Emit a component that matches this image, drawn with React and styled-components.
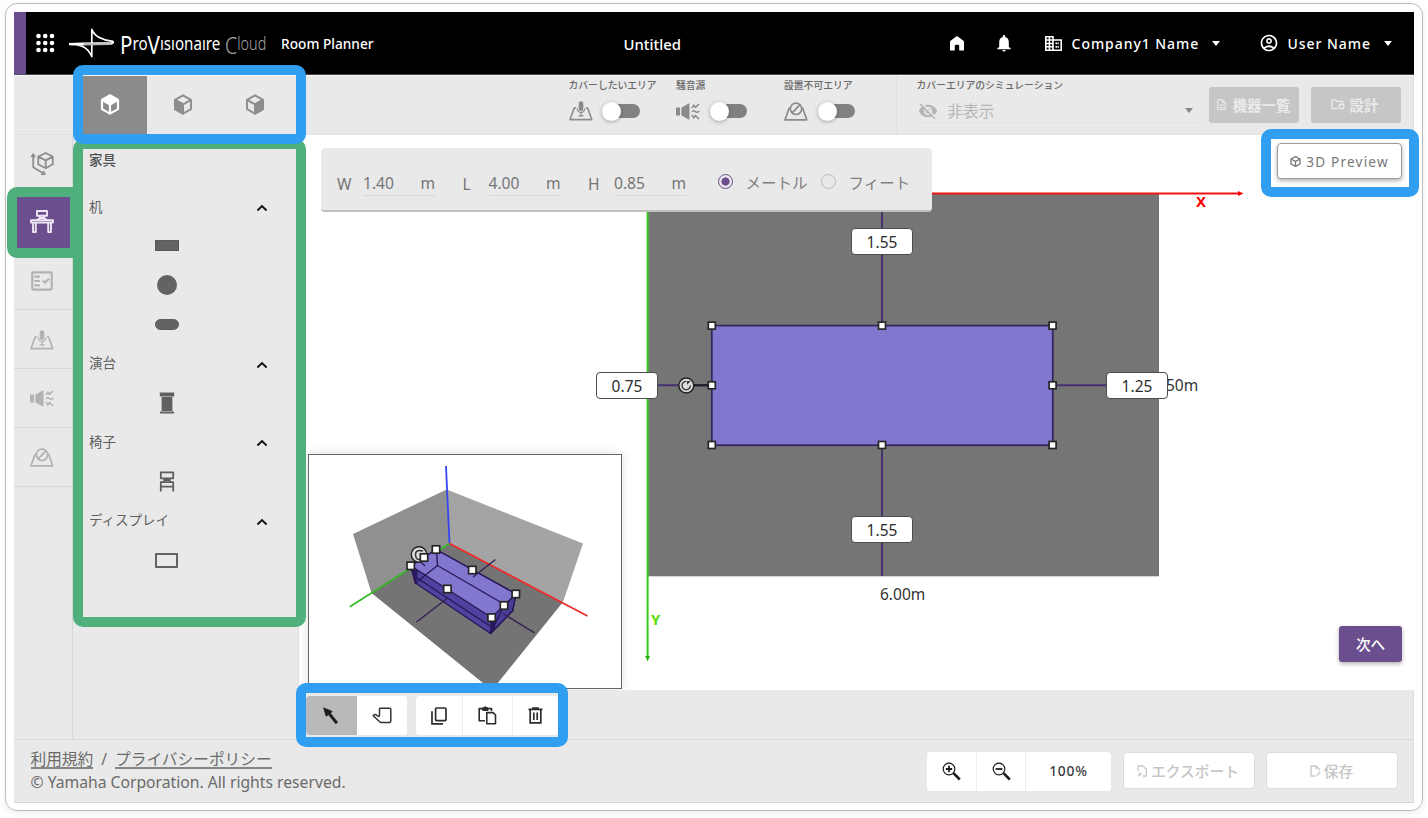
import React from "react";
import styled, { createGlobalStyle, css } from "styled-components";
import {
  MdOutlineAccountCircle,
  MdVisibilityOff,
  MdOutlineFactCheck,
  MdOutlineDescription,
} from "react-icons/md";

const GlobalStyle = createGlobalStyle`
  * { box-sizing: border-box; }
  body {
    margin: 0;
    background: #fff;
    font-family: "Noto Sans", "Noto Sans CJK JP", sans-serif;
    overflow: hidden;
  }
  svg { display: block; flex: none; }
`;

const Page = styled.div`
  position: relative;
  width: 1428px;
  height: 818px;
  padding: 3px 5px;
`;
const Frame = styled.div`
  width: 1418px;
  height: 808px;
  padding: 8px;
  border: 1px solid #bdbdbd;
  border-radius: 12px;
  box-shadow: 0 2px 6px rgba(0, 0, 0, 0.08);
`;
const Shell = styled.div`
  width: 1400px;
  height: 791px;
  display: flex;
  flex-direction: column;
  background: #e9e9e9;
  border-bottom: 1px solid #d6d6d6;
`;

/* Header */
const Header = styled.header`
  height: 63px;
  display: flex;
  align-items: center;
  background: #000;
  border-left: 12px solid #6b4e8e;
  border-bottom: 1px solid #4a4549;
  color: #fff;
  padding: 0 22px 0 10px;
`;
const HeaderGroup = styled.div`
  display: flex;
  align-items: center;
  width: ${(p) => p.$w || "auto"};
  margin-left: ${(p) => p.$ml || 0}px;
`;
const HeaderActions = styled(HeaderGroup)`
  margin-left: auto;
`;
const HeaderText = styled.span`
  font-size: ${(p) => p.$size || 14}px;
  font-weight: 500;
  letter-spacing: ${(p) => p.$ls || 0}px;
  margin-left: ${(p) => p.$ml || 0}px;
  line-height: 20px;
  padding-top: 1px;
  white-space: nowrap;
`;
const Caret = styled.span`
  width: 0;
  height: 0;
  margin-left: ${(p) => p.$ml || 0}px;
  border-left: 4.5px solid transparent;
  border-right: 4.5px solid transparent;
  border-top: 5px solid ${(p) => p.$color || "#fff"};
`;

/* Toolbar under the header */
const Toolbar = styled.div`
  height: 60px;
  display: flex;
  align-items: stretch;
  border-top: 1px solid #f7f7f7;
  border-bottom: 1px solid #e0e0e0;
  border-right: 1px solid #dedede;
  padding-left: 60px;
`;
const Tab = styled.div`
  width: 72.5px;
  display: flex;
  align-items: center;
  justify-content: center;
  padding-bottom: 2px;
  background: ${(p) => (p.$active ? "#8b8b8b" : "transparent")};
`;
const ToggleGroups = styled.div`
  display: flex;
  width: 605px;
  padding-left: 277px;
  border-right: 1px solid #e1e1e1;
`;
const ToggleCell = styled.div`
  width: ${(p) => p.$w}px;
  flex: none;
`;
const SmallLabel = styled.div`
  font-size: 9.8px;
  line-height: 14px;
  padding-top: 3px;
  height: 23px;
  color: #686868;
  font-weight: 500;
  white-space: nowrap;
`;
const ToggleRow = styled.div`
  display: flex;
  align-items: center;
  height: 24px;
`;
const Switch = styled.div`
  position: relative;
  width: 33.5px;
  height: 14px;
  margin-left: 13.5px;
  border-radius: 7px;
  background: #828282;
  &::before {
    content: "";
    position: absolute;
    left: -4px;
    top: -2.5px;
    width: 19px;
    height: 19px;
    border-radius: 50%;
    background: #fff;
    box-shadow: 0 1px 4px rgba(0, 0, 0, 0.3);
  }
`;
const Simulation = styled.div`
  width: 312px;
  padding-left: 20px;
`;
const SelectRow = styled.div`
  display: flex;
  align-items: center;
  width: 284px;
  height: 24px;
  border-bottom: 1px solid #e3e3e3;
  color: #b5b5b5;
  font-size: 15.6px;
  line-height: 22px;
  padding: 0 8px 0 1px;
  span:first-of-type { margin: 0 auto 0 10px; }
`;
const GreyButton = styled.div`
  display: flex;
  align-items: center;
  justify-content: center;
  gap: 5px;
  flex: none;
  width: 90px;
  height: 36px;
  margin: 11px 12px 0 0;
  padding: 0 2px 2px 0;
  border-radius: 3px;
  background: #c6c6c6;
  color: #ebebeb;
  font-size: 14.4px;
  font-weight: 700;
`;

/* Middle */
const Middle = styled.div`
  display: flex;
  height: 604px;
`;
const Rail = styled.nav`
  width: 59px;
  border-right: 1px solid #d6d6d6;
`;
const RailItem = styled.div`
  height: ${(p) => p.$h || 59}px;
  display: flex;
  align-items: center;
  justify-content: center;
  padding: 1px 3px 0 0;
  border-bottom: 1px solid ${(p) => (p.$active ? "#6b4e8e" : "#d8d8d8")};
  background: ${(p) => (p.$active ? "#6b4e8e" : "transparent")};
  color: #b2b2b2;
`;
const Panel = styled.aside`
  width: 226px;
  padding: 13px 30px 0 16px;
  border-right: 1px solid #dedede;
`;
const PanelTitle = styled.div`
  font-size: 13.5px;
  line-height: 24px;
  font-weight: 500;
  color: #505050;
`;
const SectionHead = styled.div`
  display: flex;
  align-items: center;
  justify-content: space-between;
  height: 24px;
  margin-top: ${(p) => p.$mt}px;
  color: #606060;
`;
const SectionTitle = styled.span`
  font-size: 13.5px;
  line-height: 20px;
  margin-bottom: 3px;
`;
const Item = styled.div`
  display: flex;
  align-items: center;
  justify-content: center;
  height: 24px;
  margin: ${(p) => p.$mt}px 24px 0 0;
`;
const RectShape = styled.div`
  width: 24px;
  height: 11.5px;
  border-radius: ${(p) => p.$r || 0}px;
  background: #636363;
  border: 1px solid #5a5a5a;
`;
const RoundShape = styled.div`
  width: 20px;
  height: 20px;
  border-radius: 50%;
  background: #636363;
`;
const DisplayShape = styled.div`
  width: 23px;
  height: 15px;
  border: 2px solid #636363;
  border-radius: 1px;
`;

const Work = styled.main`
  width: 1115px;
`;
const Canvas = styled.div`
  position: relative;
  height: 555px;
  background: #fff;
  overflow: hidden;
`;
const Drawing = styled.svg`
  position: absolute;
  inset: 0;
`;
const Distance = styled.div`
  position: absolute;
  left: ${(p) => p.$x}px;
  top: ${(p) => p.$y}px;
  width: 62px;
  height: 27px;
  border: 1px solid #4c4c4c;
  border-radius: 4px;
  background: #fff;
  color: #2c2c2c;
  font-size: 15.5px;
  line-height: 26px;
  text-align: center;
`;
const CanvasText = styled.div`
  position: absolute;
  left: ${(p) => p.$x}px;
  top: ${(p) => p.$y}px;
  line-height: 20px;
  font-size: ${(p) => p.$size || 15.5}px;
  font-weight: ${(p) => p.$weight || 400};
  color: ${(p) => p.$color || "#333"};
`;
const DimensionBar = styled.div`
  position: absolute;
  left: 22px;
  top: 13px;
  width: 611px;
  height: 64px;
  padding: 9px 0 0 16px;
  display: flex;
  align-items: center;
  border-radius: 4px;
  border-bottom: 2px solid #bfc1bf;
  background: #e9e9e9;
  color: #757575;
  font-size: 15.6px;
  line-height: 24px;
`;
const DimLabel = styled.span`
  width: ${(p) => p.$w}px;
`;
const DimField = styled.span`
  display: flex;
  justify-content: space-between;
  width: 72px;
  height: 25px;
  margin-right: ${(p) => p.$mr}px;
  border-bottom: 1px solid #d9d9d9;
`;
const Radio = styled.span`
  width: 15px;
  height: 15px;
  border-radius: 50%;
  margin: 0 ${(p) => p.$mr}px 4px 0;
  border: 1.5px solid ${(p) => (p.$on ? "#6b4e8e" : "#b8b8b8")};
  background: ${(p) => (p.$on ? "radial-gradient(circle, #6b4e8e 0 3.8px, transparent 4.4px)" : "transparent")};
`;
const RadioText = styled.span`
  width: ${(p) => p.$w}px;
  color: #808080;
  font-size: 15.5px;
  margin-bottom: 2px;
`;
const PreviewButton = styled.div`
  position: absolute;
  left: 978px;
  top: 8px;
  width: 125px;
  height: 36px;
  display: flex;
  align-items: center;
  justify-content: center;
  gap: 5px;
  border: 1px solid #9b9b9b;
  border-radius: 4px;
  background: #fff;
  color: #777;
  font-size: 13.6px;
  letter-spacing: 1.2px;
  box-shadow: 0 2px 4px rgba(0, 0, 0, 0.3);
`;
const NextButton = styled.div`
  position: absolute;
  left: 1040px;
  top: 491px;
  width: 63px;
  height: 36px;
  display: flex;
  align-items: center;
  justify-content: center;
  padding-bottom: 1px;
  border-radius: 3px;
  background: #6b4e8e;
  color: #fff;
  font-size: 14.6px;
  font-weight: 500;
  box-shadow: 0 2px 4px rgba(0, 0, 0, 0.3);
`;
const MiniView = styled.div`
  position: absolute;
  left: 9px;
  top: 319px;
  width: 314px;
  height: 235px;
  border: 1px solid #666;
  background: #fff;
  box-shadow: 0 0 10px rgba(0, 0, 0, 0.13);
`;

const EditBar = styled.div`
  display: flex;
  height: 49px;
  padding: 6px 0 0 7px;
  border-right: 1px solid #dedede;
`;
const ButtonGroup = styled.div`
  display: flex;
  height: ${(p) => p.$h || 39}px;
  margin-right: ${(p) => p.$mr || 0}px;
  border-radius: 4px;
  overflow: hidden;
  background: #fff;
`;
const ToolButton = styled.div`
  width: ${(p) => p.$w}px;
  display: flex;
  align-items: center;
  justify-content: center;
  color: #222;
  background: ${(p) => (p.$active ? "#b9b9b9" : "#fff")};
  ${(p) => p.$active && css`padding-right: 2px;`}
  ${(p) => p.$line && css`border-right: 1px solid #ececec;`}
`;

const Footer = styled.footer`
  flex: 1;
  display: flex;
  justify-content: space-between;
  border-top: 1px solid #dadada;
  border-right: 1px solid #dedede;
  padding: 0 15px 0 16.5px;
`;
const Legal = styled.div`
  padding-top: 8px;
  color: #6b6b6b;
  font-size: 15.7px;
`;
const LegalLinks = styled.div`
  display: flex;
  gap: 8px;
  height: 22px;
  line-height: 22px;
`;
const LegalLink = styled.span`
  height: 21px;
  border-bottom: 2px solid #858585;
  line-height: 22px;
`;
const Copyright = styled.div`
  font-size: 15.7px;
  line-height: 25px;
`;
const FooterActions = styled.div`
  display: flex;
  align-items: flex-start;
  padding-top: 12px;
`;
const Zoom = styled.div`
  width: 85px;
  color: #3c3c3c;
  font-size: 13.8px;
  font-weight: 500;
  letter-spacing: 0.8px;
  line-height: 38px;
  text-align: center;
`;
const GhostButton = styled.div`
  display: flex;
  align-items: center;
  justify-content: center;
  gap: 3px;
  width: 132px;
  height: 37px;
  margin: 0 0 0 11.5px;
  padding-right: 1px;
  border: 1px solid #dcdcdc;
  border-radius: 4px;
  background: #fff;
  color: #c6c6c6;
  font-size: 14.7px;
  font-weight: 500;
`;

const Callout = styled.div`
  position: absolute;
  left: ${(p) => p.$x}px;
  top: ${(p) => p.$y}px;
  width: ${(p) => p.$w}px;
  height: ${(p) => p.$h}px;
  border: 10px solid ${(p) => (p.$green ? "#4fb07e" : "#309ff2")};
  border-right-width: ${(p) => p.$rw || 10}px;
  border-radius: ${(p) => p.$radius || "10px"};
`;

/* Icons */
const AppsIcon = () => (
  <svg width="19" height="20" viewBox="0 0 19 20" fill="#fff">
    {[2.5, 9.5, 16.5].map((y) => [2.5, 9.2, 16].map((x) => <circle key={x + "-" + y} cx={x} cy={y + 0.5} r="2.3" />))}
  </svg>
);
const BrandMark = () => (
  <svg width="46" height="30" viewBox="68 28.5 46 30">
    <path d="M69 44.3C80 43.6 98 43.4 113 43.6M69 44.6C80 45 87 46.5 91.8 57L91.8 29.8C94 37 103 40.8 111.5 41.6C114.6 42 113.6 44.4 110 44.7L69 45.2" fill="none" stroke="#fff" strokeWidth="1.7" strokeLinejoin="round" />
    <path d="M84 44.6H111" stroke="#aaa" strokeWidth="1.5" />
  </svg>
);
const BrandWords = styled.div`
  display: flex;
  align-items: baseline;
  width: 148px;
  height: 36px;
  margin-left: 6px;
  line-height: 36px;
  white-space: nowrap;
`;
const BrandWord = styled.span`
  flex: none;
  width: ${(p) => p.$w}px;
  color: ${(p) => p.$color || "#fff"};
  font-size: 18px;
  font-weight: ${(p) => p.$weight || 400};
  transform: scaleX(${(p) => p.$sx});
  transform-origin: left center;
`;
const BigLetter = styled.span`
  font-size: 24.5px;
  line-height: 20px;
  vertical-align: -4px;
`;
const HomeIcon = () => (
  <svg width="14" height="15" viewBox="0 0 14 15" fill="#fff">
    <path d="M0 6Q0 5.2.6 4.7L6.2.4Q7 0 7.8.4L13.4 4.7Q14 5.2 14 6V14.5H9.2V9.7Q9.2 8.7 8.2 8.7H5.8Q4.8 8.7 4.8 9.7V14.5H0Z" />
  </svg>
);
const BellIcon = () => (
  <svg width="14" height="17" viewBox="0 0 14 17" fill="#fff">
    <path d="M5.8 1.2Q5.8 0 7 0T8.2 1.2V2Q11.8 3 11.8 7V12L13.6 13.3V14.2H.4V13.3L2.2 12V7Q2.2 3 5.8 2ZM5.3 15H8.7Q8.5 16.5 7 16.5T5.3 15Z" />
  </svg>
);
const CompanyIcon = () => (
  <svg width="17" height="15" viewBox="0 0 17 15" fill="none" stroke="#fff" strokeWidth="1.6">
    <path d="M.8.8H8V14.2H.8ZM8 4H16.2V14.2H8" />
    <path d="M.8 4H8M.8 7.4H8M.8 10.8H8M4.4 1V14" strokeWidth="1.5" />
    <path d="M10.5 7.3H13.8M10.5 10.8H13.8" strokeWidth="1.7" strokeDasharray="1.5 .5" />
  </svg>
);
const CubeIcon = ({ kind, color }) => {
  const solid = kind === "top";
  return (
    <svg width="20" height="21" viewBox="0 0 20 21" fill="none" stroke={color} strokeWidth={solid ? 2.2 : 1.9} strokeLinejoin="round">
      <path d="M10 1.4L18 5.9V15.1L10 19.6L2 15.1V5.9Z" />
      <path d="M2 5.9L10 10.4L18 5.9M10 10.4V19.6" />
      {solid && <path d="M10 1.4L18 5.9L10 10.4L2 5.9Z" fill={color} />}
      {kind === "left" && <path d="M2 5.9L10 10.4V19.6L2 15.1Z" fill={color} />}
      {kind === "right" && <path d="M18 5.9L10 10.4V19.6L18 15.1Z" fill={color} />}
    </svg>
  );
};
const RoomIcon = () => (
  <svg width="24" height="24" viewBox="0 0 24 24" fill="none" stroke="#8f8f8f" strokeWidth="1.8" strokeLinejoin="round">
    <path d="M15.7 1L22.8 4.6V12.2L15.7 16.2L8.2 12.2V4.6ZM8.2 4.6L15.7 8.4L22.8 4.6M15.7 8.4V16.2" />
    <path d="M3.2 3V15.2L13.5 21.5" />
    <path d="M1 4.8L3.2 1.5L5.4 4.8ZM11.2 22.7L15.4 22.6L13.6 18.9Z" fill="#8f8f8f" strokeWidth="1" />
  </svg>
);
const DeskIcon = () => (
  <svg width="24" height="23" viewBox="0 0 24 23" fill="none" stroke="#eee7f5" strokeWidth="1.9" strokeLinejoin="round">
    <path d="M7 1H17V5.8H7ZM9 5.8L10.4 8H13.6L15 5.8M10.2 8L7 10M13.8 8L17 10" />
    <path d="M1 10.3H23V12.6H1ZM3 12.8V22H5.8V12.8M18.2 12.8V22H21V12.8" />
  </svg>
);
const MicAreaIcon = ({ color }) => (
  <svg width="24" height="20" viewBox="0 0 24 20" fill="none" stroke={color} strokeWidth="1.6" strokeLinejoin="round">
    <path d="M7.2 7H5.2L1 18.6H22.8L18.6 7H16.8" />
    <rect x="9.7" y=".3" width="4.6" height="9.8" rx="2.3" fill={color} stroke="none" />
    <path d="M8.3 7.5Q8.6 11.4 12 11.4T15.7 7.5M12 11V14.5M9.5 14.8H14.5" strokeWidth="1.2" />
  </svg>
);
const NoiseIcon = ({ color }) => (
  <svg width="24" height="17" viewBox="0 0 24 17">
    <path d="M0 5.2Q0 4.6.6 4.6H4V12.4H.6Q0 12.4 0 11.8ZM5.3 4.8L12.5.6Q13.5.2 13.5 1.2V15.8Q13.5 16.8 12.5 16.4L5.3 12.2Z" fill={color} />
    <path d="M16 5L17.8 2.3L19.5 4.3L23 1M16 8.8Q17.5 6.8 19.3 8.5T23.3 8M16 12L17.8 14.7L19.5 12.7L23 16" fill="none" stroke={color} strokeWidth="1.5" />
  </svg>
);
const BanAreaIcon = ({ color }) => (
  <svg width="24" height="19" viewBox="0 0 24 19" fill="none" stroke={color} strokeWidth="1.7" strokeLinejoin="round">
    <path d="M6.4 6H5.2L1 17.8H22.8L18.6 6H17.4" />
    <circle cx="12" cy="6.8" r="5.7" />
    <path d="M8.2 10.8L15.8 2.9" />
  </svg>
);
const ChevronUp = () => (
  <svg width="12" height="8" viewBox="0 0 12 8" fill="none" stroke="#111" strokeWidth="1.9">
    <path d="M1.4 6.5L6 2L10.6 6.5" />
  </svg>
);
const LecternIcon = () => (
  <svg width="16" height="22" viewBox="0 0 16 22" fill="#606060">
    <path d="M.8.5H15.2V4.6H.8ZM2.6 5H13.4V19H2.6ZM1 19.5H15V21.5H1Z" />
  </svg>
);
const ChairIcon = () => (
  <svg width="16" height="21" viewBox="0 0 16 21" fill="none" stroke="#5f5f5f" strokeWidth="1.8" strokeLinejoin="round">
    <path d="M1.8 1.3H14.2V7.3H1.8ZM4.8 7.3Q6.5 9 4.5 11.2M11.2 7.3Q9.5 9 11.5 11.2M6 9H10" />
    <path d="M1.8 20.5V11.2H14.2V20.5M2 15.6H14" />
  </svg>
);
const FolderGearIcon = () => (
  <svg width="14" height="11" viewBox="0 0 14 11" fill="none" stroke="#ebebeb" strokeWidth="1.3">
    <path d="M6.5 9.5H.8V.8H4.5L6 2.3H12V4" />
    <circle cx="10.4" cy="7.4" r="2.4" />
  </svg>
);
const FileIcon = ({ edit }) => (
  <svg width="11" height="12" viewBox="0 0 11 12" fill="none" stroke="#c8c8c8" strokeWidth="1.3">
    {edit ? <path d="M5.5 11H1V1H6L9.3 4.3V5.5M6 1V4.3M7 10.5L10.3 7" /> : <path d="M1 6V1H6L9.3 4.3V11H6M1 11L4 8.3M1.5 8.3H3.7V10.5" />}
  </svg>
);
const SmallCubeIcon = () => (
  <svg width="11" height="11" viewBox="0 0 11 11" fill="none" stroke="#777" strokeWidth="1.3" strokeLinejoin="round">
    <path d="M5.5.7L10 3V8L5.5 10.3L1 8V3ZM1 3L5.5 5.3L10 3M5.5 5.3V10.3" />
  </svg>
);
const ArrowIcon = () => (
  <svg width="16" height="18" viewBox="0 0 16 18">
    <path d="M.5.8L9.2 4.3L7.5 6.3L14.7 15.2L12.7 16.8L5.5 7.8L3 9.3Z" fill="#1c1c1c" stroke="#1c1c1c" strokeWidth=".6" />
  </svg>
);
const HandIcon = () => (
  <svg width="20" height="17" viewBox="0 0 20 17" fill="none" stroke="#333" strokeWidth="1.5" strokeLinejoin="round">
    <path d="M7.5 7.5V2.2Q7.5 1 8.7 1.3H17.5Q18.8 1.3 18.8 2.6V14Q18.8 15.5 17.3 15.5H8.5L1.2 8.7Q1.8 7 3.8 7.6L6.5 9.5Q7.5 9.5 7.5 7.5Z" />
  </svg>
);
const CopyIcon = () => (
  <svg width="16" height="18" viewBox="0 0 16 18" fill="none" stroke="#2b2b2b" strokeWidth="1.7">
    <rect x="4.6" y="1" width="10.4" height="12.6" rx="1" />
    <path d="M1 4.2V16.8H12" />
  </svg>
);
const PasteIcon = () => (
  <svg width="19" height="19" viewBox="0 0 19 19" fill="none" stroke="#2b2b2b" strokeWidth="1.6" strokeLinejoin="round">
    <path d="M7 14.8H1.2V2.6H13.5V5M6.2 2.2Q7.3-.2 8.4 2.2" />
    <path d="M5 2H9.6V4.2H5Z" fill="#2b2b2b" />
    <path d="M8.8 6.6H15L17.5 9V17.8H8.8Z" />
  </svg>
);
const TrashIcon = () => (
  <svg width="15" height="17" viewBox="0 0 15 17" fill="none" stroke="#2b2b2b" strokeWidth="1.7">
    <path d="M.5 2.4H14.5M5 2V1H10V2M2.2 2.6V15.8H12.8V2.6M5.8 5.5V13M9.2 5.5V13" />
  </svg>
);
const ZoomIcon = ({ plus }) => (
  <svg width="19" height="19" viewBox="0 0 19 19" fill="none" stroke="#1d1d1d">
    <circle cx="7" cy="7" r="5.8" strokeWidth="1.2" />
    <path d="M11.5 11.2L17.8 17.5" strokeWidth="2.6" />
    <path d={plus ? "M3.8 7H10.2M7 3.8V10.2" : "M3.6 7H10.4"} strokeWidth="1.8" />
  </svg>
);

const Handle = ({ x, y, s = 3.5 }) => (
  <rect x={x - s} y={y - s} width={2 * s} height={2 * s} fill="#fff" stroke="#262626" strokeWidth="1.7" />
);

/* Plan view, in window coordinates shifted by the viewBox */
const PlanDrawing = () => (
  <Drawing width="1115" height="555" viewBox="299 135 1115 555">
    <rect x="648" y="193" width="511" height="383.3" fill="#757575" />
    <path d="M648 193.5H1240" stroke="#f21313" strokeWidth="1.8" />
    <path d="M1238 191L1243.5 193.5L1238 196Z" fill="#f00" />
    <path d="M647.6 193V657" stroke="#38c81b" strokeWidth="2" />
    <path d="M645.2 656L647.6 661.5L650 656Z" fill="#2cb512" />
    <path d="M882 193V325M882 445V576M658 385.3H711M1053 385.3H1107" stroke="#44306f" strokeWidth="1.9" />
    <path d="M690 385.3H711" stroke="#1c1c1c" strokeWidth="2" />
    <rect x="711.8" y="325.6" width="341" height="119.6" fill="#8277cf" stroke="#38265f" strokeWidth="1.8" />
    <circle cx="686.3" cy="385.5" r="7.5" fill="#ddd" stroke="#222" strokeWidth="1.5" />
    <path d="M686.3 381.4A4.2 4.2 0 1 0 690.4 385.5" fill="none" stroke="#333" strokeWidth="1.3" />
    <path d="M687 384.8V381H690.8Z" fill="#333" />
    {[[711.8, 325.6], [882, 325.6], [1052.6, 325.6], [711.8, 385.3], [1052.6, 385.3], [711.8, 445], [882, 445], [1052.6, 445]].map(([x, y]) => (
      <Handle key={x + "-" + y} x={x} y={y} />
    ))}
  </Drawing>
);

/* Isometric view of the same room */
const RoomDrawing = () => (
  <svg width="312" height="233" viewBox="309 455 312 233">
    <path d="M446.7 489.5L353 534L371.5 593L449.3 543.5Z" fill="#909090" />
    <path d="M446.7 489.5L583 543.5L563 602L449.3 543.5Z" fill="#a4a4a4" />
    <path d="M449.3 543.5L563 602L497 684L492 688H488L483 683L371.5 593Z" fill="#747474" />
    <path d="M446 466L449.5 543.5" stroke="#3646ee" strokeWidth="1.8" />
    <path d="M449.5 543.5L349.8 606.8" stroke="#34b823" strokeWidth="1.6" />
    <path d="M449.5 543.5L587.5 616" stroke="#f02a2a" strokeWidth="1.7" />
    <g stroke="#2b1659" strokeWidth="1.4" strokeLinejoin="round">
      <path d="M436 549.5L516 594L512.5 611L490.5 633.5L415.5 583L411 566Z" fill="#4f43a0" />
      <path d="M436 549.5L516 594L491.5 617.5L411 566Z" fill="#8277cf" />
      <path d="M503 607L516 594L512.5 611L490.5 633.5Z" fill="#4a3d97" />
      <path d="M411 566L415.5 583L437.5 565.5L436.5 550M437.5 565.5L502 603M415.5 577L490 626M491.5 617.5V633" fill="none" />
      <path d="M491.5 618L490.5 633.5L494 629V616Z" fill="#291c65" />
      <path d="M411.5 568L415.5 583L417 571Z" fill="#291c65" />
      <path d="M495.5 559.5L473 577M447 598.5L416.5 622M503 613.5L534.5 632.8M421 562L425 566" fill="none" stroke="#352055" />
    </g>
    <circle cx="419" cy="554.5" r="7.7" fill="#ddd" stroke="#222" strokeWidth="1.4" />
    <path d="M423 551Q415 549 415.5 555T421 559" fill="none" stroke="#333" strokeWidth="1.5" />
    {[[436, 549.5], [424, 557.5], [410.7, 565.8], [472.3, 570], [447.4, 589], [515.8, 594], [504, 605.5], [491.6, 617.6]].map(([x, y]) => (
      <Handle key={x} x={x} y={y} s={3.7} />
    ))}
  </svg>
);

const toggles = [
  { label: "カバーしたいエリア", w: 107.5, Icon: MicAreaIcon },
  { label: "騒音源", w: 108, Icon: NoiseIcon },
  { label: "設置不可エリア", w: 108, Icon: BanAreaIcon },
];

export default function App() {
  return (
    <Page>
      <GlobalStyle />
      <Frame>
        <Shell>
          <Header>
            <HeaderGroup $w="587.5px">
              <AppsIcon />
              <HeaderGroup $ml={13}>
                <BrandMark />
                <BrandWords>
                  <BrandWord $w={105} $sx={0.84}>
                    <BigLetter>P</BigLetter>ro<BigLetter>V</BigLetter>ısıonaıre
                  </BrandWord>
                  <BrandWord $w={43} $sx={0.8} $color="#a5a5a5" $weight={300}>
                    <BigLetter>C</BigLetter>loud
                  </BrandWord>
                </BrandWords>
              </HeaderGroup>
              <HeaderText $size={13.7} $ml={13}>Room Planner</HeaderText>
            </HeaderGroup>
            <HeaderText $size={14.9}>Untitled</HeaderText>
            <HeaderActions>
              <HomeIcon />
              <HeaderGroup $ml={33}><BellIcon /></HeaderGroup>
              <HeaderGroup $ml={34} $w="182px">
                <CompanyIcon />
                <HeaderText $size={14} $ls={0.95} $ml={10}>Company1 Name</HeaderText>
                <Caret $ml={13} />
              </HeaderGroup>
              <HeaderGroup $ml={32}>
                <MdOutlineAccountCircle size={20} />
                <HeaderText $size={14} $ls={0.95} $ml={9}>User Name</HeaderText>
                <Caret $ml={13} />
              </HeaderGroup>
            </HeaderActions>
          </Header>

          <Toolbar>
            <Tab $active><CubeIcon kind="top" color="#fff" /></Tab>
            <Tab><CubeIcon kind="left" color="#8d8d8d" /></Tab>
            <Tab><CubeIcon kind="right" color="#8d8d8d" /></Tab>
            <ToggleGroups>
              {toggles.map(({ label, w, Icon }) => (
                <ToggleCell key={label} $w={w}>
                  <SmallLabel>{label}</SmallLabel>
                  <ToggleRow><Icon color="#8b8b8b" /><Switch /></ToggleRow>
                </ToggleCell>
              ))}
            </ToggleGroups>
            <Simulation>
              <SmallLabel>カバーエリアのシミュレーション</SmallLabel>
              <SelectRow>
                <MdVisibilityOff size={20} />
                <span>非表示</span>
                <Caret $color="#858585" />
              </SelectRow>
            </Simulation>
            <GreyButton><MdOutlineDescription size={13} />機器一覧</GreyButton>
            <GreyButton><FolderGearIcon />設計</GreyButton>
          </Toolbar>

          <Middle>
            <Rail>
              <RailItem $h={57}><RoomIcon /></RailItem>
              <RailItem $active><DeskIcon /></RailItem>
              <RailItem><MdOutlineFactCheck size={26} /></RailItem>
              <RailItem><MicAreaIcon color="#b2b2b2" /></RailItem>
              <RailItem><NoiseIcon color="#b2b2b2" /></RailItem>
              <RailItem><BanAreaIcon color="#b2b2b2" /></RailItem>
            </Rail>
            <Panel>
              <PanelTitle>家具</PanelTitle>
              <SectionHead $mt={24}><SectionTitle>机</SectionTitle><ChevronUp /></SectionHead>
              <Item $mt={13.5}><RectShape /></Item>
              <Item $mt={15.5}><RoundShape /></Item>
              <Item $mt={15.5}><RectShape $r={6} /></Item>
              <SectionHead $mt={16}><SectionTitle>演台</SectionTitle><ChevronUp /></SectionHead>
              <Item $mt={14}><LecternIcon /></Item>
              <SectionHead $mt={16.5}><SectionTitle>椅子</SectionTitle><ChevronUp /></SectionHead>
              <Item $mt={14}><ChairIcon /></Item>
              <SectionHead $mt={16.5}><SectionTitle>ディスプレイ</SectionTitle><ChevronUp /></SectionHead>
              <Item $mt={14.5}><DisplayShape /></Item>
            </Panel>
            <Work>
              <Canvas>
                <PlanDrawing />
                <CanvasText $x={867} $y={240}>50m</CanvasText>
                <CanvasText $x={581} $y={449}>6.00m</CanvasText>
                <CanvasText $x={897} $y={56} $size={15} $weight={700} $color="#f00">X</CanvasText>
                <CanvasText $x={352} $y={474} $size={15} $weight={700} $color="#5be000">Y</CanvasText>
                <Distance $x={552} $y={93}>1.55</Distance>
                <Distance $x={297} $y={237}>0.75</Distance>
                <Distance $x={807} $y={237}>1.25</Distance>
                <Distance $x={552} $y={381}>1.55</Distance>
                <DimensionBar>
                  <DimLabel $w={26}>W</DimLabel>
                  <DimField $mr={27.5}><span>1.40</span><span>m</span></DimField>
                  <DimLabel $w={26}>L</DimLabel>
                  <DimField $mr={27.5}><span>4.00</span><span>m</span></DimField>
                  <DimLabel $w={26}>H</DimLabel>
                  <DimField $mr={31.5}><span>0.85</span><span>m</span></DimField>
                  <Radio $on $mr={13} />
                  <RadioText $w={75}>メートル</RadioText>
                  <Radio $mr={13} />
                  <RadioText $w={63}>フィート</RadioText>
                </DimensionBar>
                <MiniView><RoomDrawing /></MiniView>
                <PreviewButton><SmallCubeIcon />3D Preview</PreviewButton>
                <NextButton>次へ</NextButton>
              </Canvas>
              <EditBar>
                <ButtonGroup $mr={9}>
                  <ToolButton $w={51} $active><ArrowIcon /></ToolButton>
                  <ToolButton $w={50}><HandIcon /></ToolButton>
                </ButtonGroup>
                <ButtonGroup>
                  <ToolButton $w={47} $line><CopyIcon /></ToolButton>
                  <ToolButton $w={50} $line><PasteIcon /></ToolButton>
                  <ToolButton $w={45}><TrashIcon /></ToolButton>
                </ButtonGroup>
              </EditBar>
            </Work>
          </Middle>

          <Footer>
            <Legal>
              <LegalLinks>
                <LegalLink>利用規約</LegalLink>
                <span>/</span>
                <LegalLink>プライバシーポリシー</LegalLink>
              </LegalLinks>
              <Copyright>© Yamaha Corporation. All rights reserved.</Copyright>
            </Legal>
            <FooterActions>
              <ButtonGroup $h={38.5}>
                <ToolButton $w={50} $line><ZoomIcon plus /></ToolButton>
                <ToolButton $w={49} $line><ZoomIcon /></ToolButton>
                <Zoom>100%</Zoom>
              </ButtonGroup>
              <GhostButton><FileIcon />エクスポート</GhostButton>
              <GhostButton><FileIcon edit />保存</GhostButton>
            </FooterActions>
          </Footer>
        </Shell>
      </Frame>

      <Callout $green $x={7} $y={187} $w={68} $h={71} $rw={5} $radius="10px 0 0 10px" />
      <Callout $green $x={73} $y={139} $w={233} $h={488} />
      <Callout $x={73} $y={65} $w={233} $h={79} />
      <Callout $x={1261} $y={129} $w={158} $h={68} />
      <Callout $x={296} $y={683} $w={272} $h={64} />
    </Page>
  );
}
